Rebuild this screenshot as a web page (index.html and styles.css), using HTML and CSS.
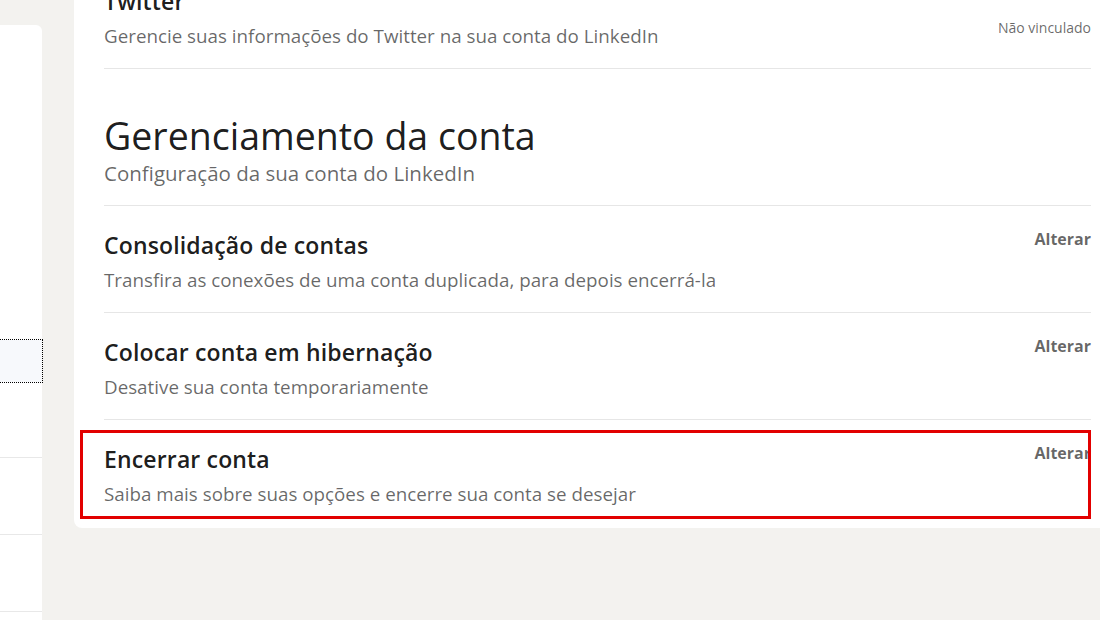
FILE: index.html
```html
<!DOCTYPE html>
<html lang="pt-BR">
<head>
<meta charset="utf-8">
<title>Preferências da conta</title>
<link rel="stylesheet" href="styles.css">
</head>
<body>
<div class="page">
  <aside class="side">
    <div class="side-spacer"></div>
    <div class="side-item side-item--focus"></div>
    <div class="side-item side-item--a"></div>
    <div class="side-item side-item--b"></div>
    <div class="side-item side-item--b"></div>
  </aside>
  <main class="card">
    <section class="row">
      <div class="row-text">
        <h3 class="row-title">Twitter</h3>
        <p class="row-desc">Gerencie suas informações do Twitter na sua conta do LinkedIn</p>
      </div>
      <span class="status">Não vinculado</span>
    </section>
    <header class="section-head">
      <h2 class="section-title">Gerenciamento da conta</h2>
      <p class="section-desc">Configuração da sua conta do LinkedIn</p>
    </header>
    <section class="row">
      <div class="row-text">
        <h3 class="row-title">Consolidação de contas</h3>
        <p class="row-desc">Transfira as conexões de uma conta duplicada, para depois encerrá-la</p>
      </div>
      <a class="action">Alterar</a>
    </section>
    <section class="row">
      <div class="row-text">
        <h3 class="row-title">Colocar conta em hibernação</h3>
        <p class="row-desc">Desative sua conta temporariamente</p>
      </div>
      <a class="action">Alterar</a>
    </section>
    <section class="row row--last">
      <div class="row-text">
        <h3 class="row-title">Encerrar conta</h3>
        <p class="row-desc">Saiba mais sobre suas opções e encerre sua conta se desejar</p>
      </div>
      <a class="action">Alterar</a>
      <div class="highlight"></div>
    </section>
  </main>
</div>
</body>
</html>
```

FILE: styles.css
```css
html, body {
  margin: 0;
  padding: 0;
  background: #f3f2ef;
  height: 100%;
  overflow: hidden;
}
body {
  font-family: "Open Sans", "Noto Sans", sans-serif;
  color: rgba(0,0,0,0.9);
}
.page {
  display: flex;
  align-items: flex-start;
  height: 620px;
}
.side {
  width: 42px;
  flex: none;
  margin-top: 25px;
  background: #fff;
  border-top-right-radius: 6px;
  align-self: stretch;
}
.side-spacer {
  height: 315px;
}
.side-item--focus {
  height: 42px;
  width: 42px;
  background: #f7f9fc;
  outline: 1px dotted #000;
  outline-offset: 0;
  position: relative;
}
.side-item--a {
  height: 75px;
  border-bottom: 1px solid #e8e8e8;
}
.side-item--b {
  height: 76px;
  border-bottom: 1px solid #e8e8e8;
}
.card {
  flex: 1;
  margin-left: 32px;
  margin-right: -30px;
  margin-top: -34px;
  background: #fff;
  border-bottom-left-radius: 8px;
  padding: 0 39px 2px 30px;
}
.row {
  position: relative;
  display: flex;
  justify-content: space-between;
  align-items: flex-start;
  padding: 21px 0 20px;
  border-bottom: 1px solid #e6e6e6;
}
.row:first-child {
  padding-top: 17px;
}
.row--last {
  border-bottom: none;
}
.row-text {
  min-width: 0;
}
.row-title {
  margin: 4px 0 0;
  font-size: 23px;
  letter-spacing: 0.15px;
  line-height: 28px;
  font-weight: 600;
  color: rgba(0,0,0,0.9);
}
.row-desc {
  margin: 9px 0 0;
  font-size: 18.8px;
  line-height: 24px;
  font-weight: 400;
  color: rgba(0,0,0,0.6);
}
.action {
  font-size: 16px;
  line-height: 24px;
  font-weight: 700;
  color: rgba(0,0,0,0.6);
  cursor: pointer;
}
.status {
  margin-top: 35px;
  font-size: 14px;
  line-height: 20px;
  color: rgba(0,0,0,0.6);
}
.section-head {
  padding: 45px 0 20px;
  border-bottom: 1px solid #e6e6e6;
}
.section-title {
  margin: 0;
  font-size: 37.5px;
  line-height: 44px;
  font-weight: 400;
  color: rgba(0,0,0,0.9);
}
.section-desc {
  margin: 3px 0 0;
  font-size: 20.5px;
  line-height: 24px;
  color: rgba(0,0,0,0.6);
}
.highlight {
  position: absolute;
  top: 10px;
  left: -24px;
  width: 1011px;
  height: 89px;
  box-sizing: border-box;
  border: 3px solid #e20000;
  pointer-events: none;
}
```
